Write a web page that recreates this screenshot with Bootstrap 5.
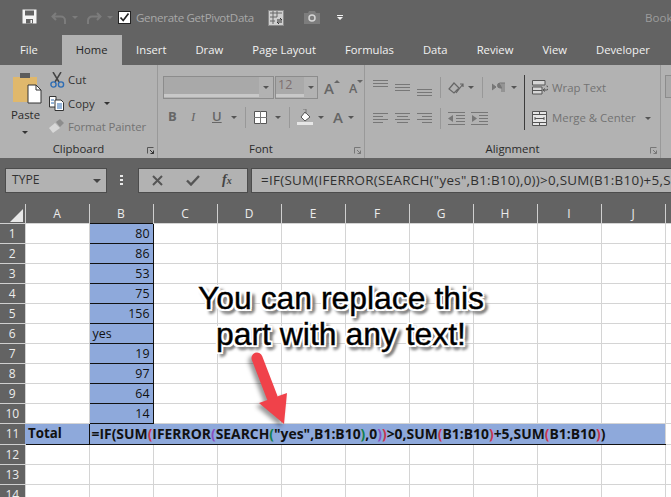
<!DOCTYPE html>
<html lang="en"><head><meta charset="utf-8"><title>Excel</title>
<link href="https://cdn.jsdelivr.net/npm/bootstrap@5.3.0/dist/css/bootstrap.min.css" rel="stylesheet">
<style>
html,body{margin:0;background:#636363;overflow:hidden;width:671px;height:497px}
body{font-family:"Open Sans","Noto Sans",sans-serif;font-size:12px;position:relative}
svg{display:block;flex:none}
.qat{height:35px;color:#a8a8a8;padding-left:22px;white-space:nowrap}
.qat svg{position:relative}
.tick{width:13px;height:13px;background:#fff;border:1px solid #222;margin:0 5px 0 0}
.tabs{height:30px;color:#f2f2f2;font-size:11.25px}
.tabx{padding:7px 14.5px 0;height:30px;white-space:nowrap}
.tabx.on{background:#b2b2b2;color:#262626;padding:7px 14px 0}
.ribbon{height:93px;background:#b2b2b2;color:#333;font-size:11.4px}
.grp{position:relative;height:93px;border-right:1px solid #999;flex:none}
.grplabel{position:absolute;bottom:-2px;left:0;right:0;height:18px;text-align:center;color:#2b2b2b;font-size:11.4px;line-height:14px}
.launch{position:absolute;right:3px;bottom:4px}
.carety{width:0;height:0;border-left:3px solid transparent;border-right:3px solid transparent;border-top:3px solid #555;flex:none}
.dim{color:#737373}
.fbox{height:23px;border:1px solid #8c8c8c;background:#b2b2b2}
.fin{height:20px;background:#a9a9a9;border-bottom:3px solid #c8c8c8;color:#7d6f6f;font-size:12.5px;line-height:16px;padding-left:2px}
.vsep{width:1px;background:#989898;flex:none}
.fbar{height:25px;margin-top:10px;padding-left:5px;gap:0;white-space:nowrap}
.fld{height:25px;background:#b2b2b2;border:1px solid #4c4c4c;color:#333;flex:none}
.fml{font-size:13.4px;line-height:23px;padding-left:9px;width:430px;overflow:hidden;color:#303030;letter-spacing:.28px}
.sheetwrap{margin-top:11px;width:671px;overflow:hidden}
table.sheet{table-layout:fixed;width:671px;border-collapse:collapse;margin:0;font-family:"Open Sans",sans-serif;--bs-table-bg:transparent;background:#fff}
table.sheet td,table.sheet th{padding:0;height:20px;line-height:19px;border:1px solid #d4d4d4;font-size:12.4px;color:#111;overflow:visible;white-space:nowrap;font-weight:400;box-shadow:none;background:#fff}
table.sheet th.hd{background:#636363;color:#ececec;text-align:center;border:0;border-left:1px solid #cfcfcf;height:19px;font-size:12px}
table.sheet th.rh{background:#636363;color:#ececec;text-align:center;border:0;border-bottom:1px solid #cfcfcf;font-size:12px}
table.sheet td.blu{background:#8ea9db;border:1px solid #111;text-align:right;padding-right:3px}
table.sheet td.lft{text-align:left;padding-left:3px;padding-right:0}
table.sheet td.tot{background:#8ea9db;border-top:1px solid #111;border-bottom:1px solid #111;border-left:0;border-right:1px solid #111;font-weight:700;padding-left:3px;height:21px;font-size:13.3px}
table.sheet td.frm{background:#8ea9db;border-top:1px solid #111;border-bottom:1px solid #111;border-right:1px solid #d4d4d4;font-weight:700;padding-left:2px;font-size:13.9px;height:21px;border-left:1px solid #111}
.pr{color:#c9354f}.pp{color:#8a4fc0}.pg{color:#12804a}
.callout{position:absolute;left:141px;top:280px;width:400px;text-align:center;font-family:"Liberation Sans",Arial,sans-serif;font-size:31.9px;line-height:36px;color:#000;-webkit-text-stroke:.4px #000;
text-shadow:0 0 1px #fff,2px 2px 0 #fff,-2px -2px 0 #fff,2px -2px 0 #fff,-2px 2px 0 #fff,2px 0 0 #fff,-2px 0 0 #fff,0 2px 0 #fff,0 -2px 0 #fff,4px 4px 3px #777,2px 5px 3px #888,5px 2px 3px #888}
.redarrow{position:absolute;left:245px;top:345px;filter:drop-shadow(-3px 3px 2px rgba(0,0,0,.4))}
</style></head>
<body>
<div class="qat d-flex align-items-center">
<svg width="15" height="15" viewBox="0 0 15 15" style="top:-1px"><path d="M0.5 0.5H14.5V14.5H0.5Z" fill="#f4f4f4"/><rect x="3" y="1.5" width="9" height="5" fill="#636363"/><rect x="4" y="10" width="7" height="4.5" fill="#636363"/><rect x="8.5" y="11" width="1.5" height="3" fill="#f4f4f4"/></svg>
<svg width="16" height="14" viewBox="0 0 16 14" style="margin-left:14px"><path d="M5 2 1.5 5.5 5 9M2 5.5H10a4 4 0 0 1 4 4V13" fill="none" stroke="#7c7c7c" stroke-width="2"/></svg>
<div class="carety" style="margin-left:5px;border-top-color:#7c7c7c"></div>
<svg width="16" height="14" viewBox="0 0 16 14" style="margin-left:8px"><path d="M11 2 14.5 5.5 11 9M14 5.5H6a4 4 0 0 0-4 4V13" fill="none" stroke="#7c7c7c" stroke-width="2"/></svg>
<div class="carety" style="margin-left:5px;border-top-color:#7c7c7c"></div>
<div class="tick" style="margin-left:5px"><svg width="11" height="11" viewBox="0 0 11 11"><path d="M1.5 5.5 4.2 8.5 9.5 1.5" fill="none" stroke="#222" stroke-width="1.7"/></svg></div>
<span style="font-size:11.6px;letter-spacing:-.32px">Generate GetPivotData</span>
<svg width="16" height="16" viewBox="0 0 16 16" style="margin-left:14px"><rect x=".5" y=".5" width="15" height="15" fill="#cfcfcf" stroke="#8a8a8a"/><path d="M2 3H14M2 7H9M2 11H7M5 1V14M9 1V7" stroke="#666" fill="none"/><path d="M9 10h5l-2-2M14 12H9l2 2" stroke="#333" fill="none"/></svg>
<div style="width:1px;height:15px;background:#f2f2f2;margin:-9px 0 0 10px"></div>
<svg width="16" height="13" viewBox="0 0 16 13" style="margin-left:10px"><path d="M0 2H4L5 0H11L12 2H16V13H0Z" fill="#7d7d7d"/><circle cx="8" cy="7" r="3" fill="none" stroke="#d5d5d5" stroke-width="1.5"/></svg>
<svg width="6" height="6" viewBox="0 0 6 6" style="margin-left:17px"><path d="M0 0H6V1H0ZM0 2H6L3 5Z" fill="#f2f2f2"/></svg>
<span style="margin-left:302px;color:#9c9c9c;font-size:11.6px">Book</span>
</div>
<div class="tabs d-flex">
<div class="tabx" style="padding-left:20px;padding-right:24px">File</div><div class="tabx on">Home</div><div class="tabx">Insert</div><div class="tabx">Draw</div><div class="tabx">Page Layout</div><div class="tabx">Formulas</div><div class="tabx">Data</div><div class="tabx">Review</div><div class="tabx">View</div><div class="tabx">Developer</div>
</div>
<div class="ribbon d-flex">
 <div class="grp" style="width:158px">
  <div class="d-flex">
   <div style="width:49px;padding:8px 0 0 13px">
    <svg width="29" height="31" viewBox="0 0 29 31"><path d="M0 4H7V1.5H17V4H24V29H0Z" fill="#e0b86c"/><rect x="7" y="0" width="10" height="5" fill="#5c5c5c"/><rect x="10" y="0" width="4" height="2" fill="#5c5c5c"/><path d="M15 12H23L28 17V30H15Z" fill="#fff" stroke="#333"/><path d="M23 12V17H28" fill="none" stroke="#333"/></svg>
    <div style="margin:3px 0 0 -2px;line-height:16px;color:#2b2b2b">Paste</div>
    <div class="carety" style="margin:8px 0 0 9px;border-top-color:#333"></div>
   </div>
   <div style="padding-top:3px">
    <div class="d-flex align-items-center" style="height:24px"><svg width="15" height="16" viewBox="0 0 15 16" style="margin:0 3px 0 1px"><path d="M3 0 9 10M11 0 5 10" stroke="#444" stroke-width="1.5" fill="none"/><circle cx="3.5" cy="12.5" r="2.6" fill="none" stroke="#2e6db4" stroke-width="1.4"/><circle cx="11" cy="12.5" r="2.6" fill="none" stroke="#2e6db4" stroke-width="1.4"/></svg>Cut</div>
    <div class="d-flex align-items-center" style="height:23px"><svg width="15" height="15" viewBox="0 0 15 15" style="margin-right:4px"><path d="M.5.5H7V11H.5Z" fill="#fff" stroke="#333"/><path d="M6 4H12L14.5 6.5V14.5H6Z" fill="#fff" stroke="#333"/><path d="M2 4H5M2 7H5M8 8H13M8 10H13M8 12H13" stroke="#2e6db4"/></svg>Copy<div class="carety" style="margin-left:9px;border-top-color:#333"></div></div>
    <div class="d-flex align-items-center dim" style="height:23px"><svg width="15" height="15" viewBox="0 0 15 15" style="margin-right:4px"><path d="M0 9 6 4 11 9 4 14Z" fill="#d8d8d8"/><path d="M7 3 11 0 15 4 11 8Z" fill="#8d8d8d"/></svg><span style="letter-spacing:-.1px">Format Painter</span></div>
   </div>
  </div>
  <div class="grplabel">Clipboard</div>
  <svg class="launch" width="7" height="7" viewBox="0 0 7 7"><path d="M.5 6.5V.5H6.5" fill="none" stroke="#555"/><path d="M3 3 6.5 6.5M6.5 3.5V6.5H3.5" fill="none" stroke="#333"/></svg>
 </div>
 <div class="grp" style="width:207px">
  <div class="d-flex align-items-center" style="padding:11px 0 0 5px">
   <div class="fbox d-flex" style="width:111px"><div class="fin" style="width:95px"></div><div class="d-flex align-items-center justify-content-center flex-fill"><div class="carety"></div></div></div>
   <div class="fbox d-flex" style="width:43px;margin-left:1px"><div class="fin" style="width:28px">12</div><div class="d-flex align-items-center justify-content-center flex-fill"><div class="carety"></div></div></div>
   <span style="font-size:15px;line-height:16px;color:#666;margin-left:6px;font-weight:600">A</span><svg width="6" height="3" style="margin:-12px 0 0 0"><path d="M0 3 3 0 6 3Z" fill="#666"/></svg>
   <span style="font-size:12.5px;line-height:16px;color:#666;margin:2px 0 0 9px;font-weight:600">A</span><svg width="6" height="3" style="margin:-12px 0 0 0"><path d="M0 0H6L3 3Z" fill="#666"/></svg>
  </div>
  <div class="d-flex align-items-center" style="padding:6px 0 0 10px;height:30px;color:#666">
   <b style="font-size:13px;width:20px">B</b><i style="font-size:13px;width:24px;padding-left:3px;font-family:'Liberation Serif',serif">I</i><span style="font-size:13px;font-weight:600;text-decoration:underline;width:19px">U</span><div class="carety" style="margin-right:8px"></div>
   <div class="vsep" style="height:21px"></div>
   <svg width="13" height="13" viewBox="0 0 13 13" style="margin:0 8px"><path d="M.5.5H12.5V12.5H.5Z" fill="#fff" stroke="#555"/><path d="M6.5 0V13M0 6.5H13" stroke="#777"/></svg><div class="carety" style="margin-right:8px"></div>
   <div class="vsep" style="height:21px"></div>
   <svg width="16" height="16" viewBox="0 0 16 16" style="margin:0 5px 0 7px"><path d="M4 8 8 3 13 8 8 12Z" fill="#fff" stroke="#555"/><path d="M6 0H9V5" stroke="#777" fill="none"/><rect y="13" width="16" height="3" fill="#e6e6e6"/></svg><div class="carety"></div>
   <span style="font-size:15px;font-weight:600;margin-left:9px">A</span><div class="carety" style="margin-left:5px"></div>
  </div>
  <div class="grplabel">Font</div>
  <svg class="launch" width="7" height="7" viewBox="0 0 7 7"><path d="M.5 6.5V.5H6.5" fill="none" stroke="#777"/><path d="M3 3 6.5 6.5M6.5 3.5V6.5H3.5" fill="none" stroke="#777"/></svg>
 </div>
 <div class="grp" style="width:296px">
  <div class="d-flex">
   <div style="width:159px;padding:11px 0 0 8px">
    <div class="d-flex align-items-center" style="height:23px">
     <svg width="15" height="20" viewBox="0 0 15 20" style="margin-right:7px"><path d="M0 2.5H15M0 5.5H15M0 8.5H15" stroke="#777"/></svg>
     <svg width="15" height="20" viewBox="0 0 15 20" style="margin-right:7px"><path d="M0 6.5H15M0 9.5H15M0 12.5H15" stroke="#777"/></svg>
     <svg width="15" height="20" viewBox="0 0 15 20" style="margin-right:8px"><path d="M0 11.5H15M0 14.5H15M0 17.5H15" stroke="#777"/></svg>
     <div class="vsep" style="height:21px;margin-right:7px"></div>
     <svg width="17" height="15" viewBox="0 0 17 15"><path d="M1 9 6 3 11 8 6 13ZM8 13 15 4M12 4H15V7" fill="none" stroke="#666" stroke-width="1.2"/></svg><div class="carety" style="margin:0 8px 0 3px"></div>
     <div class="vsep" style="height:21px;margin-right:9px"></div>
     <svg width="13" height="11" viewBox="0 0 13 11"><path d="M0 2 4 5 0 8ZM8 1H13M10 1V10M12 1V10M8 1a2.5 2.5 0 0 0 0 5H10" fill="#777" stroke="#777"/></svg><div class="carety" style="margin-left:6px"></div>
    </div>
    <div class="d-flex align-items-center" style="height:38px">
     <svg width="15" height="13" viewBox="0 0 15 13" style="margin-right:7px"><path d="M0 1.5H15M0 4.5H10M0 7.5H15M0 10.5H10" stroke="#777"/></svg>
     <svg width="15" height="13" viewBox="0 0 15 13" style="margin-right:7px"><path d="M0 1.5H15M2 4.5H13M0 7.5H15M2 10.5H13" stroke="#777"/></svg>
     <svg width="15" height="13" viewBox="0 0 15 13" style="margin-right:8px"><path d="M0 1.5H15M5 4.5H15M0 7.5H15M5 10.5H15" stroke="#777"/></svg>
     <div class="vsep" style="height:21px;margin-right:7px"></div>
     <svg width="17" height="13" viewBox="0 0 17 13" style="margin-right:6px"><path d="M0 .5H17M8 3.5H17M8 6.5H17M8 9.5H17M0 12.5H17" stroke="#777"/><path d="M0 6.5 5 3V10Z" fill="#777"/></svg>
     <svg width="17" height="13" viewBox="0 0 17 13"><path d="M0 .5H17M8 3.5H17M8 6.5H17M8 9.5H17M0 12.5H17" stroke="#777"/><path d="M6 6.5 1 3V10Z" fill="#777"/></svg>
    </div>
   </div>
   <div style="width:1px;height:55px;background:#3c3c3c;margin-top:10px"></div>
   <div class="dim" style="padding:11px 0 0 7px">
    <div class="d-flex align-items-center" style="height:23px"><svg width="16" height="15" viewBox="0 0 16 15" style="margin-right:4px"><path d="M.5.5H13V5H.5ZM.5 7H10V14H.5ZM.5 10.5H10" fill="#d6d6d6" stroke="#555"/><path d="M11 10H14.5a1.5 1.5 0 0 0 0-4M11 10 13 8.5M11 10 13 11.5" fill="none" stroke="#555"/></svg>Wrap Text</div>
    <div class="d-flex align-items-center" style="height:38px"><svg width="15" height="15" viewBox="0 0 15 15" style="margin-right:5px"><path d="M.5.5H14.5V14.5H.5Z" fill="#e6e6e6" stroke="#555"/><path d="M0 3.5H15M0 11.5H15M7.5 0V3M7.5 12V15M3 7.5H12M3 6V9M12 6V9" stroke="#555"/></svg>Merge &amp; Center<div class="carety" style="margin-left:9px"></div></div>
   </div>
  </div>
  <div class="grplabel">Alignment</div>
  <svg class="launch" width="7" height="7" viewBox="0 0 7 7"><path d="M.5 6.5V.5H6.5" fill="none" stroke="#777"/><path d="M3 3 6.5 6.5M6.5 3.5V6.5H3.5" fill="none" stroke="#777"/></svg>
 </div>
 <div class="flex-fill" style="padding:10px 0 0 4px"><div class="fbox" style="border-right:0;background:#a9a9a9"></div></div>
</div>
<div class="fbar d-flex align-items-center">
 <div class="fld d-flex align-items-center justify-content-between" style="width:102px;padding:0 5px 0 6px;font-size:12.2px">TYPE<div class="carety" style="border-left-width:4px;border-right-width:4px;border-top-width:4px;border-top-color:#444"></div></div>
 <svg width="3" height="11" viewBox="0 0 3 11" style="margin:0 14px 0 13px"><path d="M0 0H3V2H0ZM0 4H3V6H0ZM0 8H3V10H0Z" fill="#e8e8e8"/></svg>
 <div class="fld d-flex align-items-center" style="width:110px;margin-left:1px">
  <svg width="11" height="11" viewBox="0 0 11 11" style="margin-left:13px"><path d="M1 1 10 10M10 1 1 10" stroke="#555" stroke-width="2"/></svg>
  <svg width="14" height="11" viewBox="0 0 14 11" style="margin-left:23px"><path d="M1 5.5 5 9.5 13 1" fill="none" stroke="#555" stroke-width="2.4"/></svg>
  <span style="margin-left:22px;font-family:'Liberation Serif',serif;font-style:italic;font-weight:700;font-size:14px;color:#444;line-height:14px">f<small style="font-size:10px">x</small></span>
 </div>
 <div class="fld fml" style="margin-left:3px">=IF(SUM(IFERROR(SEARCH("yes",B1:B10),0))&gt;0,SUM(B1:B10)+5,SUM(B1:B10))</div>
</div>
<div class="sheetwrap">
<table class="table sheet">
<colgroup><col style="width:25px"><col style="width:64px"><col style="width:64px"><col style="width:64px"><col style="width:64px"><col style="width:64px"><col style="width:64px"><col style="width:64px"><col style="width:64px"><col style="width:64px"><col style="width:64px"><col style="width:6px"></colgroup>
<tr><th class="hd" style="border-left:0;border-bottom:1px solid #cfcfcf"><svg width="13" height="13" viewBox="0 0 13 13" style="margin:5px 0 0 10px"><path d="M13 0V13H0Z" fill="#e8e8e8"/></svg></th><th class="hd">A</th><th class="hd">B</th><th class="hd">C</th><th class="hd">D</th><th class="hd">E</th><th class="hd">F</th><th class="hd">G</th><th class="hd">H</th><th class="hd">I</th><th class="hd">J</th><th class="hd"></th></tr>
<tr><th class="rh">1</th><td></td><td class="blu">80</td><td></td><td></td><td></td><td></td><td></td><td></td><td></td><td></td><td></td></tr>
<tr><th class="rh">2</th><td></td><td class="blu">86</td><td></td><td></td><td></td><td></td><td></td><td></td><td></td><td></td><td></td></tr>
<tr><th class="rh">3</th><td></td><td class="blu">53</td><td></td><td></td><td></td><td></td><td></td><td></td><td></td><td></td><td></td></tr>
<tr><th class="rh">4</th><td></td><td class="blu">75</td><td></td><td></td><td></td><td></td><td></td><td></td><td></td><td></td><td></td></tr>
<tr><th class="rh">5</th><td></td><td class="blu">156</td><td></td><td></td><td></td><td></td><td></td><td></td><td></td><td></td><td></td></tr>
<tr><th class="rh">6</th><td></td><td class="blu lft">yes</td><td></td><td></td><td></td><td></td><td></td><td></td><td></td><td></td><td></td></tr>
<tr><th class="rh">7</th><td></td><td class="blu">19</td><td></td><td></td><td></td><td></td><td></td><td></td><td></td><td></td><td></td></tr>
<tr><th class="rh">8</th><td></td><td class="blu">97</td><td></td><td></td><td></td><td></td><td></td><td></td><td></td><td></td><td></td></tr>
<tr><th class="rh">9</th><td></td><td class="blu">64</td><td></td><td></td><td></td><td></td><td></td><td></td><td></td><td></td><td></td></tr>
<tr><th class="rh">10</th><td></td><td class="blu">14</td><td></td><td></td><td></td><td></td><td></td><td></td><td></td><td></td><td></td></tr>
<tr><th class="rh">11</th><td class="tot">Total</td><td class="frm" colspan="9">=IF(SUM<span class="pr">(</span>IFERROR<span class="pp">(</span>SEARCH<span class="pg">(</span>"yes",B1:B10<span class="pg">)</span>,0<span class="pp">)</span><span class="pr">)</span>&gt;0,SUM<span class="pr">(</span>B1:B10<span class="pr">)</span>+5,SUM<span class="pr">(</span>B1:B10<span class="pr">)</span>)</td><td></td></tr>
<tr><th class="rh">12</th><td></td><td></td><td></td><td></td><td></td><td></td><td></td><td></td><td></td><td></td><td></td></tr>
<tr><th class="rh">13</th><td></td><td></td><td></td><td></td><td></td><td></td><td></td><td></td><td></td><td></td><td></td></tr>
<tr><th class="rh">14</th><td></td><td></td><td></td><td></td><td></td><td></td><td></td><td></td><td></td><td></td><td></td></tr>
</table>
</div>
<div class="callout">You can replace this<br>part with any text!</div>
<svg class="redarrow" width="50" height="85" viewBox="0 0 50 85"><path d="M12 13 27 52" stroke="#f0424a" stroke-width="11" stroke-linecap="round" fill="none"/><path d="M14 58 42 48 39 79Z" fill="#f0424a"/></svg>
</body></html>
